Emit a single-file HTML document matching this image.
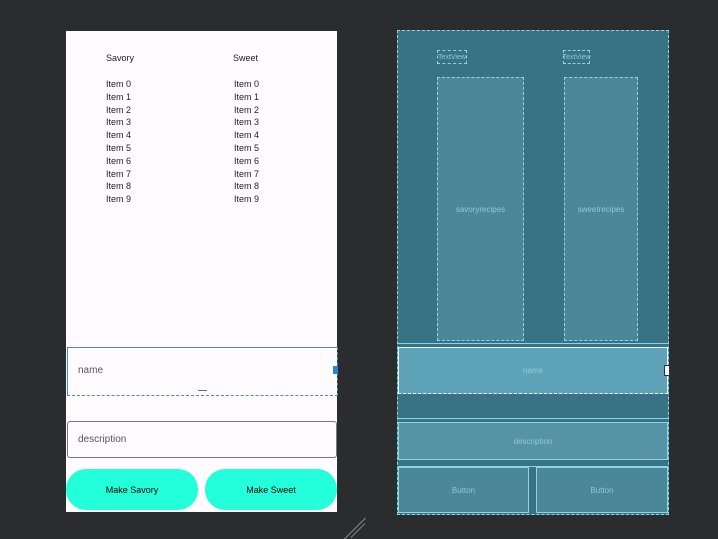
<!DOCTYPE html>
<html><head><style>
body{margin:0;width:718px;height:538px;background:#2b2c2e;position:relative;overflow:hidden;font-family:"Liberation Sans",sans-serif}
.a{position:absolute;box-sizing:border-box}
.t{position:absolute;font-size:9px;color:#222;line-height:12.8px}
.bp{border:1px dashed #8fd3e6}
.bl{color:#8fc8d8;font-size:8px;display:flex;align-items:center;justify-content:center}
</style></head><body>
<div class="a" style="left:66px;top:31px;width:271px;height:481px;background:#fffbfe"></div>
<div class="t" style="left:106px;top:52px">Savory</div>
<div class="t" style="left:233px;top:52px">Sweet</div>
<div class="t" style="left:106px;top:78px">Item 0<br>Item 1<br>Item 2<br>Item 3<br>Item 4<br>Item 5<br>Item 6<br>Item 7<br>Item 8<br>Item 9</div>
<div class="t" style="left:234px;top:78px">Item 0<br>Item 1<br>Item 2<br>Item 3<br>Item 4<br>Item 5<br>Item 6<br>Item 7<br>Item 8<br>Item 9</div>
<div class="a" style="left:67px;top:347px;width:271px;height:49px;border:1px solid #4a86d0;border-bottom:1px dashed #4a86d0;border-right:1px dashed #4a86d0"></div>
<div class="t" style="left:78px;top:365px;font-size:10px;color:#555">name</div>
<div class="a" style="left:333px;top:366px;width:5px;height:8px;background:#2a82e0"></div>
<div class="a" style="left:198px;top:390px;width:9px;height:1px;background:#3a78c8"></div>
<div class="a" style="left:67px;top:421px;width:270px;height:37px;border:1px solid #777;border-radius:3px"></div>
<div class="t" style="left:78px;top:434px;font-size:10px;color:#555">description</div>
<div class="a" style="left:66px;top:469px;width:132px;height:41px;background:#22ffda;border-radius:20px;font-size:9px;display:flex;align-items:center;justify-content:center">Make Savory</div>
<div class="a" style="left:205px;top:469px;width:132px;height:41px;background:#22ffda;border-radius:20px;font-size:9px;display:flex;align-items:center;justify-content:center">Make Sweet</div>

<div class="a bp" style="left:397px;top:30px;width:272px;height:485px;background:#377285"></div>
<div class="a bp bl" style="left:437px;top:50px;width:30px;height:14px;font-size:7px">TextView</div>
<div class="a bp bl" style="left:563px;top:50px;width:27px;height:14px;font-size:7px">TextView</div>
<div class="a bp bl" style="left:437px;top:77px;width:87px;height:264px;background:#4a8799">savoryrecipes</div>
<div class="a bp bl" style="left:564px;top:77px;width:74px;height:264px;background:#4a8799">sweetrecipes</div>
<div class="a" style="left:398px;top:343px;width:270px;height:4px;border-top:1px solid #8fd3e6"></div>
<div class="a bl" style="left:398px;top:347px;width:270px;height:47px;background:#5fa3b8;border:1px solid #e8f6fa;border-bottom:1px dashed #fff">name</div>
<div class="a" style="left:664px;top:365px;width:6px;height:11px;background:#fff;border:1px solid #235"></div>
<div class="a" style="left:398px;top:418px;width:270px;height:1px;background:#8fd3e6"></div>
<div class="a bl" style="left:398px;top:422px;width:270px;height:38px;background:#5593a6;border:1px solid #8fd3e6">description</div>
<div class="a" style="left:398px;top:466px;width:270px;height:1px;background:#8fd3e6"></div>
<div class="a bl" style="left:398px;top:467px;width:131px;height:46px;background:#4a8799;border:1px solid #8fd3e6">Button</div>
<div class="a bl" style="left:536px;top:467px;width:132px;height:46px;background:#4a8799;border:1px solid #8fd3e6">Button</div>
<div class="a" style="left:340px;top:528px;width:30px;height:1px;background:#888;transform:rotate(-45deg)"></div>
<div class="a" style="left:348px;top:530px;width:20px;height:1px;background:#888;transform:rotate(-45deg)"></div>
</body></html>
